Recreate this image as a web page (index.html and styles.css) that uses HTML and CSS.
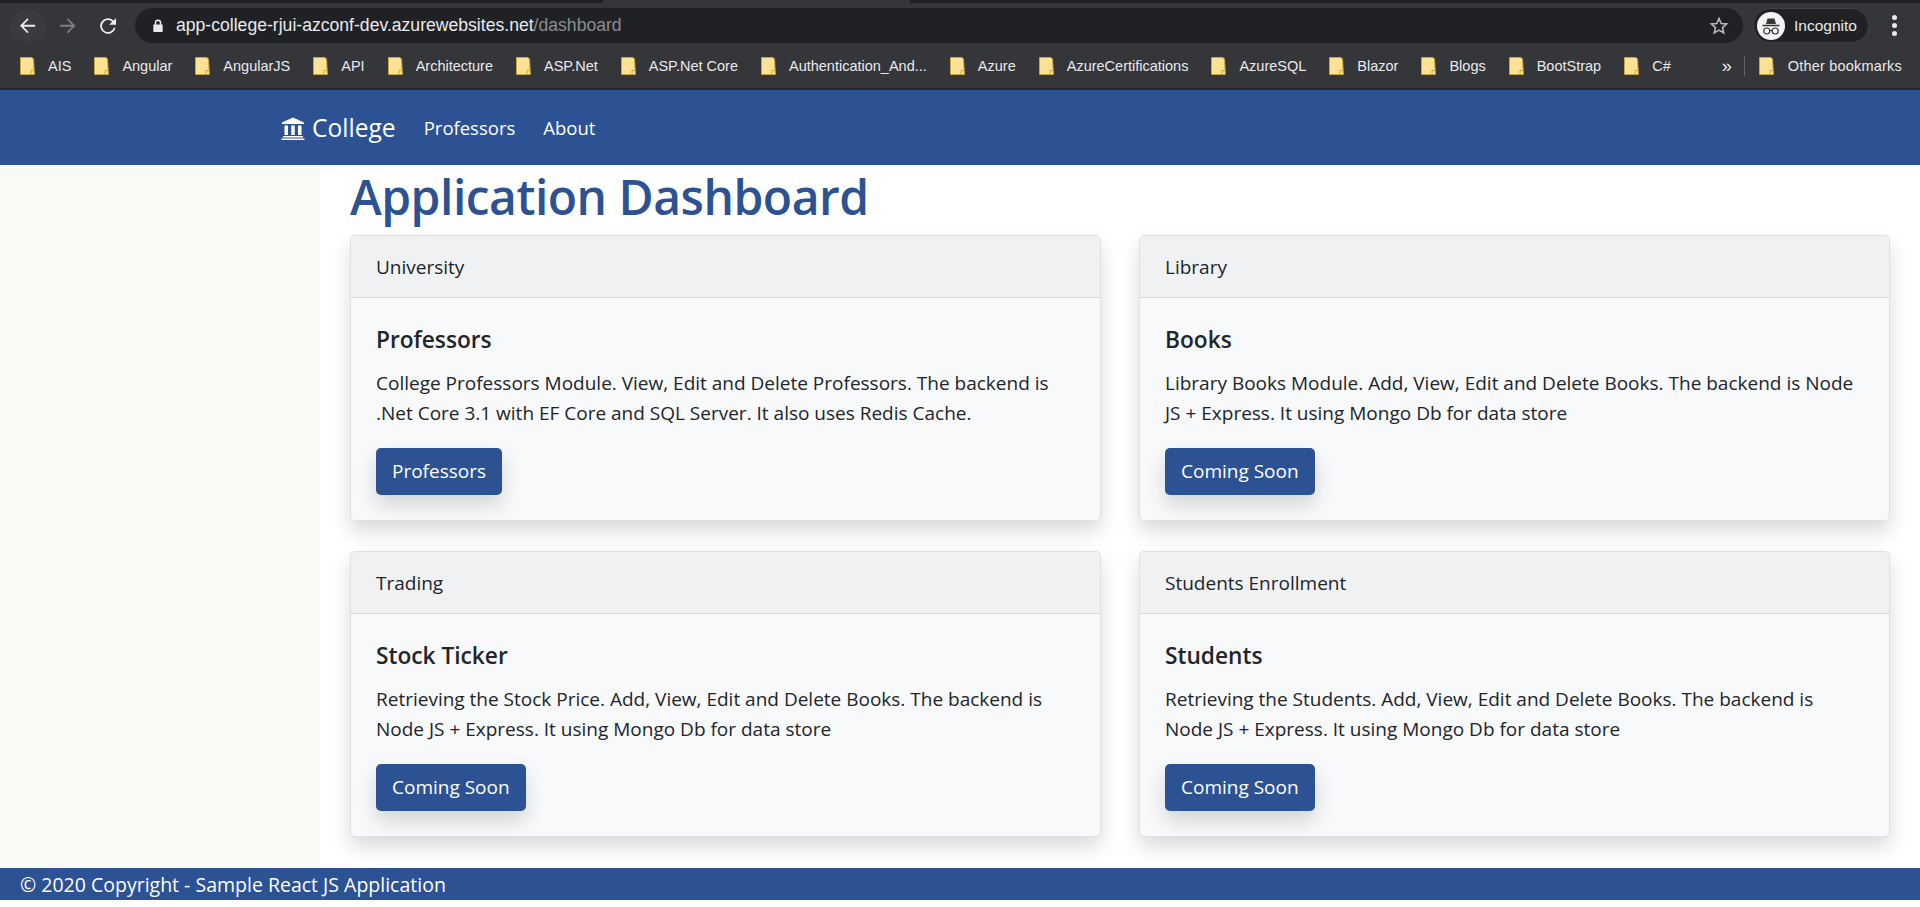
FILE: index.html
```html
<!DOCTYPE html>
<html lang="en">
<head>
    <meta charset="UTF-8">
    <title>College - Application Dashboard</title>
    <link rel="stylesheet" href="styles.css">
</head>
<body>

<!-- Browser chrome -->
<div class="tabstrip">
    <div class="tab-dark tab-left"></div>
    <div class="tab-active"></div>
    <div class="tab-dark tab-right"></div>
</div>
<div class="toolbar">
    <div class="back-button">
        <svg class="nav-icon" viewBox="2 2 14.500 14.500"><path d="M15 8.300H5.600l4.100-4.200-.9-1L2.800 9l6 6 .9-.9-4.100-4.200H15z" fill="#e8eaed"/></svg>
    </div>
    <svg class="nav-icon" viewBox="2 2 14.500 14.500"><path d="M3 8.300h9.400L8.300 4.100l.9-1 6 5.900-6 6-.9-.9 4.100-4.200H3z" fill="#7d7f83"/></svg>
    <svg class="nav-icon" viewBox="1.500 1.500 15 15"><path d="M13.600 4.400A6.500 6.500 0 1 0 15.300 10.500h-1.500a5 5 0 1 1-1.300-5l-2.500 2.500h5.700V2.400z" fill="#e8eaed"/></svg>
    <div class="omnibox">
        <svg class="lock" viewBox="0 0 12 14"><path d="M2.500 6V4a3.500 3.500 0 0 1 7 0v2h1.500v8H1V6zm1.600 0h3.800V4a1.900 1.900 0 0 0-3.800 0z" fill="#e8eaed"/></svg>
        <span class="url">app-college-rjui-azconf-dev.azurewebsites.net<span class="url-path">/dashboard</span></span>
        <svg class="star" viewBox="0 0 20 20"><path d="M10 2.500l2.200 5 5.400.5-4.100 3.600 1.200 5.300L10 14.100l-4.700 2.800 1.200-5.300L2.400 8l5.400-.5z" fill="none" stroke="#b8babd" stroke-width="1.600"/></svg>
    </div>
    <div class="profile">
        <svg class="profile-icon" viewBox="0 0 28 28">
            <circle cx="14" cy="14" r="14" fill="#f1f3f4"/>
            <path d="M10.500 6.500h7l1.500 5.500h-10zM5.500 12.800h17v1.500h-17z" fill="#35363a"/>
            <circle cx="9.800" cy="19" r="3" fill="none" stroke="#35363a" stroke-width="1.200"/>
            <circle cx="18.200" cy="19" r="3" fill="none" stroke="#35363a" stroke-width="1.200"/>
            <path d="M12.500 18.500h3" stroke="#35363a" stroke-width="1.200"/>
        </svg>
        <span>Incognito</span>
    </div>
    <div class="menu-dots"><i></i><i></i><i></i></div>
</div>
<div class="bookmarks">
    <a class="bookmark"><svg class="folder"><use href="#folder-shape"/></svg>AIS</a>
    <a class="bookmark"><svg class="folder"><use href="#folder-shape"/></svg>Angular</a>
    <a class="bookmark"><svg class="folder"><use href="#folder-shape"/></svg>AngularJS</a>
    <a class="bookmark"><svg class="folder"><use href="#folder-shape"/></svg>API</a>
    <a class="bookmark"><svg class="folder"><use href="#folder-shape"/></svg>Architecture</a>
    <a class="bookmark"><svg class="folder"><use href="#folder-shape"/></svg>ASP.Net</a>
    <a class="bookmark"><svg class="folder"><use href="#folder-shape"/></svg>ASP.Net Core</a>
    <a class="bookmark"><svg class="folder"><use href="#folder-shape"/></svg>Authentication_And...</a>
    <a class="bookmark"><svg class="folder"><use href="#folder-shape"/></svg>Azure</a>
    <a class="bookmark"><svg class="folder"><use href="#folder-shape"/></svg>AzureCertifications</a>
    <a class="bookmark"><svg class="folder"><use href="#folder-shape"/></svg>AzureSQL</a>
    <a class="bookmark"><svg class="folder"><use href="#folder-shape"/></svg>Blazor</a>
    <a class="bookmark"><svg class="folder"><use href="#folder-shape"/></svg>Blogs</a>
    <a class="bookmark"><svg class="folder"><use href="#folder-shape"/></svg>BootStrap</a>
    <a class="bookmark"><svg class="folder"><use href="#folder-shape"/></svg>C#</a>
    <span class="more">»</span>
    <span class="divider"></span>
    <a class="bookmark bookmark-last"><svg class="folder"><use href="#folder-shape"/></svg>Other bookmarks</a>
</div>
<svg class="sprite">
    <symbol id="folder-shape" viewBox="0 0 15 18">
        <path d="M.5.500h11.500l1.500 1.500.9 15.500H.500z" fill="#fde293" stroke="#c9a53f"/>
        <path d="M11 17.500v-4h3.400" fill="none" stroke="#c9a53f"/>
    </symbol>
</svg>

<!-- App navbar -->
<nav class="navbar">
    <a class="brand">
        <svg class="brand-icon" viewBox="0 0 24 24">
            <path d="M12 1.500L1 6.500V8h22V6.500zM2 20h20v1.500H2zM.500 22.500h23V24H.500zM3.500 9.500h3.500V19H3.500zM10.250 9.500h3.500V19h-3.500zM17 9.500h3.500V19H17z" fill="#fff"/>
        </svg>
        College
    </a>
    <a class="nav-link">Professors</a>
    <a class="nav-link">About</a>
</nav>

<div class="page">
    <div class="sidebar"></div>
    <main class="content">
        <h1>Application Dashboard</h1>
        <div class="card-grid">
            <div class="card">
                <div class="card-header">University</div>
                <div class="card-body">
                    <h5>Professors</h5>
                    <p>College Professors Module. View, Edit and Delete Professors. The backend is .Net Core 3.1 with EF Core and SQL Server. It also uses Redis Cache.</p>
                    <a class="btn">Professors</a>
                </div>
            </div>
            <div class="card">
                <div class="card-header">Library</div>
                <div class="card-body">
                    <h5>Books</h5>
                    <p>Library Books Module. Add, View, Edit and Delete Books. The backend is Node JS + Express. It using Mongo Db for data store</p>
                    <a class="btn">Coming Soon</a>
                </div>
            </div>
            <div class="card">
                <div class="card-header">Trading</div>
                <div class="card-body">
                    <h5>Stock Ticker</h5>
                    <p>Retrieving the Stock Price. Add, View, Edit and Delete Books. The backend is Node JS + Express. It using Mongo Db for data store</p>
                    <a class="btn">Coming Soon</a>
                </div>
            </div>
            <div class="card">
                <div class="card-header">Students Enrollment</div>
                <div class="card-body">
                    <h5>Students</h5>
                    <p>Retrieving the Students. Add, View, Edit and Delete Books. The backend is Node JS + Express. It using Mongo Db for data store</p>
                    <a class="btn">Coming Soon</a>
                </div>
            </div>
        </div>
    </main>
</div>

<footer class="footer">© 2020 Copyright - Sample React JS Application</footer>

</body>
</html>
```
FILE: styles.css
```css
* {
    box-sizing: border-box;
}
html, body {
    height: 100%;
}
body {
    margin: 0;
    display: flex;
    flex-direction: column;
    background-color: #fff;
    font-family: "Open Sans", "Noto Sans", sans-serif;
    color: #212529;
    overflow: hidden;
}
.sprite {
    display: none;
}

/* browser chrome */
.tabstrip {
    height: 8px;
    display: flex;
    background-color: #35363a;
}
.tab-dark {
    height: 3px;
    background-color: #202124;
}
.tab-left {
    width: 603px;
}
.tab-active {
    width: 307px;
}
.tab-right {
    flex: 1;
}
.toolbar {
    height: 35px;
    display: flex;
    align-items: center;
    padding: 0 0 0 19px;
    background-color: #35363a;
}
.nav-icon {
    width: 18px;
    height: 18px;
    margin-right: 22px;
}
.back-button {
    flex: none;
    width: 34px;
    height: 34px;
    margin: 0 14px 0 -8px;
    padding-left: 8px;
    display: flex;
    align-items: center;
    border-radius: 50%;
    background-color: #3a3b3f;
}
.back-button .nav-icon {
    margin-right: 0;
}
.omnibox {
    width: 1608px;
    height: 35px;
    margin-left: -4px;
    padding: 0 14px 0 17px;
    display: flex;
    align-items: center;
    border-radius: 18px;
    background-color: #202124;
}
.lock {
    width: 12px;
    height: 13px;
    margin-right: 12px;
}
.url {
    flex: 1;
    font-family: "Liberation Sans", sans-serif;
    font-size: 17.6px;
    color: #e8eaed;
}
.url-path {
    color: #8b8d90;
}
.star {
    width: 20px;
    height: 20px;
}
.profile {
    width: 116px;
    height: 35px;
    margin-left: 10px;
    padding-left: 3px;
    display: flex;
    align-items: center;
    gap: 9px;
    border: 1px solid #3f4044;
    border-radius: 18px;
    background-color: #202124;
    color: #e8eaed;
    font-family: "Liberation Sans", sans-serif;
    font-size: 15.500px;
}
.profile-icon {
    width: 28px;
    height: 28px;
}
.menu-dots {
    flex: 1;
    display: flex;
    flex-direction: column;
    align-items: center;
    gap: 3px;
}
.menu-dots i {
    width: 5px;
    height: 5px;
    border-radius: 50%;
    background-color: #e8eaed;
}
.bookmarks {
    height: 47px;
    display: flex;
    align-items: center;
    padding-left: 20px;
    background-color: #35363a;
    border-bottom: 2px solid #26272a;
    font-family: "Liberation Sans", sans-serif;
    font-size: 14.500px;
    color: #e8eaed;
}
.bookmark {
    display: flex;
    align-items: center;
    gap: 13px;
    margin-right: 23px;
    white-space: nowrap;
}
.bookmark-last {
    gap: 14px;
    margin-right: 18px;
    letter-spacing: 0.200px;
}
.folder {
    width: 15px;
    height: 18px;
}
.more {
    margin-left: auto;
    font-size: 18px;
    line-height: 1;
}
.divider {
    width: 1px;
    height: 20px;
    margin: 0 14px 0 12px;
    background-color: #5f6368;
}

/* app */
.navbar {
    height: 75px;
    display: flex;
    align-items: center;
    padding-left: 281px;
    background-color: #2c5294;
    color: #fff;
}
.brand {
    display: flex;
    align-items: center;
    gap: 7px;
    margin-right: 28px;
    font-size: 24.600px;
}
.brand-icon {
    width: 24px;
    height: 24px;
}
.nav-link {
    margin-right: 28px;
    font-size: 18.500px;
}
.page {
    flex: 1;
    display: flex;
}
.sidebar {
    width: 320px;
    background-color: #f9faf5;
}
.content {
    flex: 1;
    padding: 0 30px;
}
h1 {
    margin: 0 0 7px;
    font-size: 48px;
    line-height: 63px;
    font-weight: 600;
    letter-spacing: -0.500px;
    color: #2c5294;
}
.card-grid {
    display: grid;
    grid-template-columns: 1fr 1fr;
    gap: 30px 38px;
}
.card {
    border: 1px solid #dfe0e3;
    border-radius: 5px;
    background-color: #f8f9fa;
    box-shadow: 0 10px 20px rgba(0, 0, 0, 0.15);
}
.card-header {
    height: 62px;
    padding: 0 25px;
    display: flex;
    align-items: center;
    background-color: #f0f1f3;
    border-bottom: 1px solid #d7d9dc;
    border-radius: 5px 5px 0 0;
    font-size: 19px;
}
.card-body {
    padding: 28px 25px 25px;
}
h5 {
    margin: 0 0 14px;
    font-size: 22.700px;
    line-height: 28px;
    font-weight: 600;
}
p {
    margin: 0 0 20px;
    font-size: 19px;
    line-height: 30px;
}
.btn {
    display: inline-block;
    padding: 0 16px;
    height: 47px;
    line-height: 47px;
    border-radius: 5px;
    background-color: #2c5294;
    box-shadow: 0 10px 20px rgba(0, 0, 0, 0.15);
    color: #fff;
    font-size: 19px;
}
.footer {
    height: 32px;
    margin-bottom: 7px;
    padding: 0 20px;
    display: flex;
    align-items: center;
    background-color: #2c5294;
    color: #fff;
    font-size: 19.500px;
}
```
